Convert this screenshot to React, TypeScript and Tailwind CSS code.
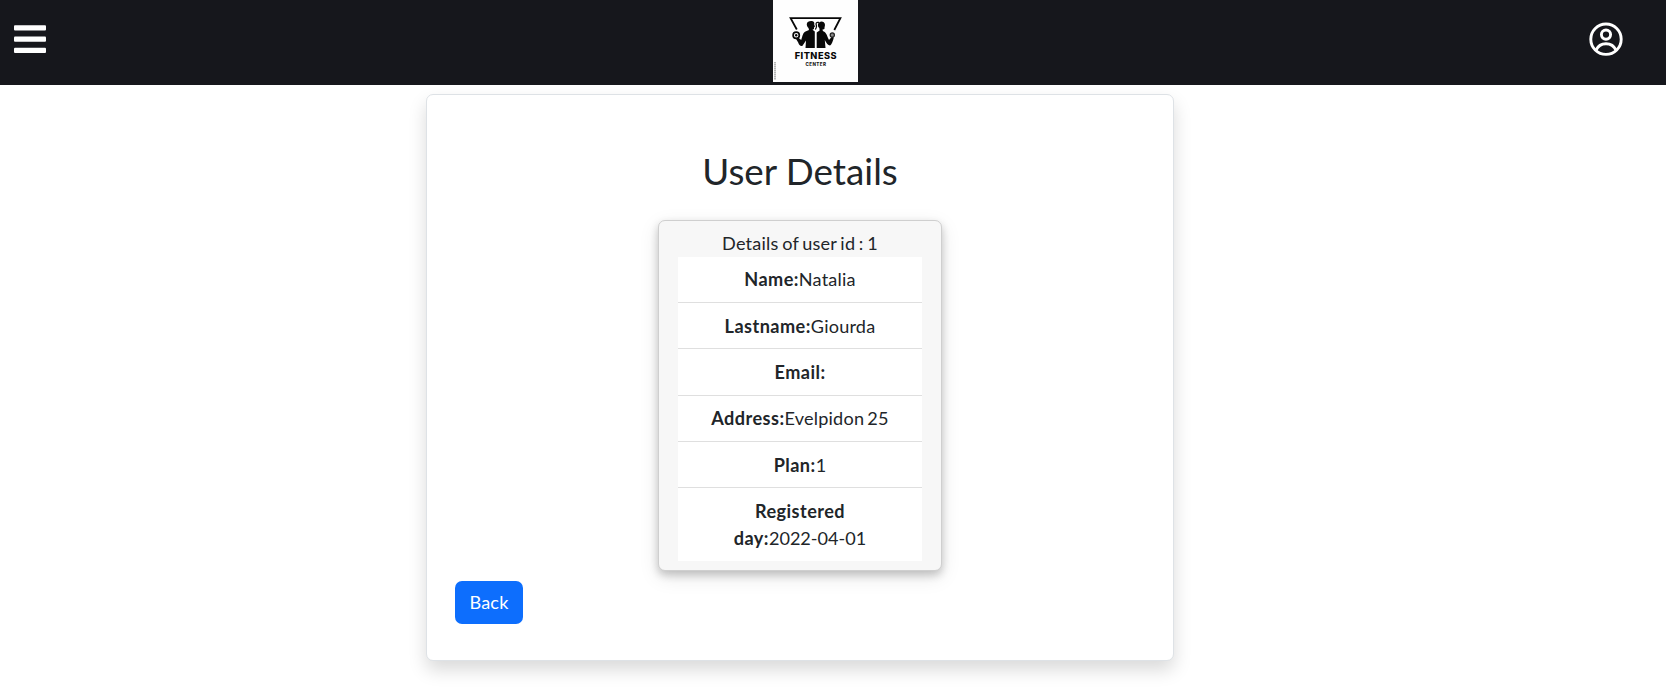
import React from "react";

const details = [
  { label: "Name:", value: "Natalia" },
  { label: "Lastname:", value: "Giourda" },
  { label: "Email:", value: "" },
  { label: "Address:", value: "Evelpidon 25" },
  { label: "Plan:", value: "1" },
  { label: "Registered day:", value: "2022-04-01" },
];

function Logo() {
  return (
    <svg width="85" height="82" viewBox="0 0 85 82" className="block bg-[#fefefe]">
      <path d="M23.8 29.5 L17.6 18.1 H67.4 L61.3 30" fill="none" stroke="#080808" strokeWidth="1.8" />
      <path d="M33.8 24 C34.2 21.6 36.5 20.8 39 21.1 C41.2 21.4 41.6 23 41.2 24.5 L42 26.5 L41 27.5 V29 L39.5 29.8 L41.8 31.5 V48 H32.5 L33 40.5 L29.5 45.8 C27.5 46.5 26 45 25.2 42.5 L22.8 38.5 L24.8 37.2 L28.2 40 C29.5 36 30 32.5 32.5 31.5 L36 30 L35.5 28 C34.5 27 33.6 25.5 33.8 24 Z" fill="#080808" />
      <path d="M45 24 C46 21.2 49 20.8 50.8 22.2 C52.5 23.7 52 25.5 51.6 27 L51.4 29 L49.3 29.8 L50.2 31.3 C53.5 32 54 36.5 56 40 L59 36.5 L60.8 37.5 C60 40.5 59 44.5 57 45.5 C55 45.5 53.5 43 51.8 40 L52.5 48 H43.7 V32.5 L46.6 30.5 L46.3 28 C45 27 44.7 25.5 45 24 Z" fill="#080808" />
      <path d="M46 22.5 C43 21.8 42.6 23.5 43.4 25.5 C44 27.5 43 28.5 42.3 29.5" fill="none" stroke="#080808" strokeWidth="1.3" />
      <circle cx="23.2" cy="35.3" r="3.1" fill="#fff" stroke="#080808" strokeWidth="1.7" />
      <circle cx="23.2" cy="35.3" r="1.2" fill="#080808" />
      <circle cx="59.3" cy="35" r="2.1" fill="#888" stroke="#222" strokeWidth="1.2" />
      <text x="42.9" y="59.4" textAnchor="middle" fill="#080808" fontFamily="Inter, sans-serif" fontWeight="800" fontSize="9.2" letterSpacing="0.5">FITNESS</text>
      <text x="42.9" y="65.6" textAnchor="middle" fill="#181818" fontFamily="Inter, sans-serif" fontWeight="800" fontSize="4.5" letterSpacing="0.45">CENTER</text>
      <path d="M2 62V80" stroke="#999" strokeWidth="1.4" strokeDasharray="1.5 .5" />
    </svg>
  );
}

export default function App() {
  return (
    <div className="flex h-[697px] w-full flex-col overflow-hidden bg-white font-['Lato',sans-serif] text-[18.1px] leading-[27.2px] text-[#212529]">
      <header className="flex h-[85px] shrink-0 items-start justify-between bg-[#16171c]">
        <button className="ml-[14px] mt-[25px]" aria-label="Menu">
          <svg width="32" height="28" viewBox="0 0 32 28" fill="#fff" className="block">
            <rect y="0.3" width="32" height="5.3" rx="1" />
            <rect y="11.4" width="32" height="5.3" rx="1" />
            <rect y="22.8" width="32" height="5.2" rx="1" />
          </svg>
        </button>
        <div className="ml-[-5px]"><Logo /></div>
        <button className="mr-[43px] mt-[22px]" aria-label="Profile">
          <svg width="34" height="34" viewBox="0 0 34 34" fill="none" stroke="#fff" strokeWidth="2.9" className="block">
            <circle cx="17" cy="17.2" r="15.2" />
            <circle cx="17" cy="12.6" r="4.6" />
            <path d="M7 28.2C9 23.7 12.5 21.7 17 21.7S25 23.7 27 28.2" />
          </svg>
        </button>
      </header>
      <main className="ml-[426px] mt-[9px] h-[567px] w-[748px] shrink-0 rounded-[7px] border border-[#dee2e6] bg-white px-[28px] shadow-[0_9px_18px_rgba(0,0,0,0.15)]">
        <h2 className="mt-[53px] text-center text-[36.8px] leading-[46px]">User Details</h2>
        <section className="mx-auto mt-[26px] h-[351px] w-[284px] rounded-[7px] border border-[#cfcfcf] bg-[#f7f7f7] px-[19px] pt-[9px] text-center shadow-[0_4px_8px_rgba(0,0,0,0.2),0_6px_20px_rgba(0,0,0,0.1)]">
          <div className="h-[27px] tracking-[0.2px] [word-spacing:-1.2px]">Details of user id : 1</div>
          <ul className="bg-white">
            {details.map((item) => (
              <li key={item.label} className="border-b border-[#dfdfdf] px-[18px] pb-[8.5px] pt-[9.5px] tracking-[0.2px] [word-spacing:-1.7px] first:pb-[9px] first:pt-[9px] last:border-b-0 last:pb-[9.1px] last:tracking-normal nth-5:pb-[8px] nth-5:pt-[10px]">
                <b className="tracking-[0.45px]">{item.label}</b>
                <span className="whitespace-nowrap">{item.value}</span>
              </li>
            ))}
          </ul>
        </section>
        <button className="mt-[10px] h-[43px] w-[68px] rounded-[7px] bg-[#0d6efd] tracking-[0.15px] text-white">Back</button>
      </main>
    </div>
  );
}
